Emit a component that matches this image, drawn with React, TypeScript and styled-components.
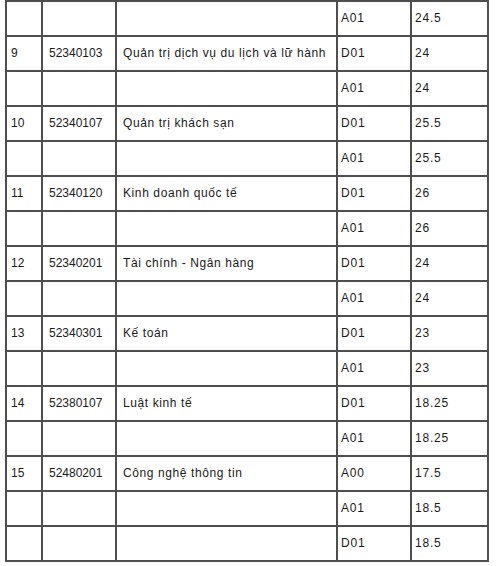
import { createGlobalStyle, styled } from 'styled-components'

const GlobalStyle = createGlobalStyle`
  html, body {
    margin: 0;
    padding: 0;
    background: #fff;
  }
`

const Page = styled.div`
  padding-left: 5px;
  background: #fff;
`

const Table = styled.table`
  border-collapse: separate;
  border-spacing: 0;
  border-top: 2px solid #4f4f4f;
  border-left: 2px solid #4f4f4f;
  table-layout: fixed;
  font-family: 'Liberation Sans', Arial, sans-serif;
  font-size: 12px;
  color: #1a1a1a;
`

type Col = { w: number; pad: number; ls: number }

const cols: Col[] = [
  { w: 36, pad: 4, ls: 0 },
  { w: 74, pad: 6, ls: 0 },
  { w: 221, pad: 6, ls: 0.6 },
  { w: 74, pad: 3, ls: 0.8 },
  { w: 77, pad: 3, ls: 0.8 },
]

const Cell = styled.td<{ $col: Col }>`
  box-sizing: border-box;
  width: ${({ $col }) => $col.w}px;
  height: 35px;
  padding: 0 0 1px ${({ $col }) => $col.pad}px;
  letter-spacing: ${({ $col }) => $col.ls}px;
  border-right: 2px solid #4f4f4f;
  border-bottom: 2px solid #4f4f4f;
  vertical-align: middle;
  white-space: nowrap;
  overflow: hidden;
`

const rows: string[][] = [
  ['', '', '', 'A01', '24.5'],
  ['9', '52340103', 'Quản trị dịch vụ du lịch và lữ hành', 'D01', '24'],
  ['', '', '', 'A01', '24'],
  ['10', '52340107', 'Quản trị khách sạn', 'D01', '25.5'],
  ['', '', '', 'A01', '25.5'],
  ['11', '52340120', 'Kinh doanh quốc tế', 'D01', '26'],
  ['', '', '', 'A01', '26'],
  ['12', '52340201', 'Tài chính - Ngân hàng', 'D01', '24'],
  ['', '', '', 'A01', '24'],
  ['13', '52340301', 'Kế toán', 'D01', '23'],
  ['', '', '', 'A01', '23'],
  ['14', '52380107', 'Luật kinh tế', 'D01', '18.25'],
  ['', '', '', 'A01', '18.25'],
  ['15', '52480201', 'Công nghệ thông tin', 'A00', '17.5'],
  ['', '', '', 'A01', '18.5'],
  ['', '', '', 'D01', '18.5'],
]

export default function App() {
  return (
    <Page>
      <GlobalStyle />
      <Table>
        <tbody>
          {rows.map((row, i) => (
            <tr key={i}>
              {row.map((text, j) => (
                <Cell key={j} $col={cols[j]}>
                  {text}
                </Cell>
              ))}
            </tr>
          ))}
        </tbody>
      </Table>
    </Page>
  )
}
